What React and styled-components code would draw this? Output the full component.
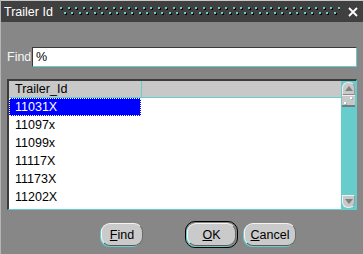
import React from 'react'
import styled, { createGlobalStyle } from 'styled-components'

const GlobalStyle = createGlobalStyle`
    body {
        margin: 0;
        font-family: "Liberation Sans", Arial, sans-serif;
        font-size: 12px;
    }
`

const Window = styled.div`
    width: 363px;
    height: 254px;
    box-sizing: border-box;
    background: #878787;
    border-left: 1px solid #b4b4b4;
    display: flex;
    flex-direction: column;
    overflow: hidden;
`

const TitleBar = styled.div`
    height: 21px;
    border-top: 1px solid #c8c8c8;
    background: #404040;
    display: flex;
    align-items: center;
    padding-left: 3px;
`

const Title = styled.span`
    color: #ffffff;
    font-size: 12.5px;
    margin-right: 7px;
    white-space: nowrap;
`

const Dots = styled.svg`
    flex: 1;
    height: 21px;
    display: block;
`

const Close = styled.svg`
    width: 10px;
    height: 10px;
    margin: 0 5px 0 8px;
`

const FindRow = styled.div`
    display: flex;
    align-items: center;
    margin-top: 25px;
    padding-left: 6px;
`

const Label = styled.span`
    width: 25px;
    color: #f6f6f6;
    font-size: 12.5px;
`

const Input = styled.div`
    width: 325px;
    height: 20px;
    box-sizing: border-box;
    background: #fff;
    border-top: 1px solid #3a3a3a;
    border-left: 1px solid #3a3a3a;
    border-right: 1px solid #66cccc;
    border-bottom: 1px solid #66cccc;
    padding-left: 3px;
    line-height: 18px;
    color: #000;
    font-size: 12.5px;
`

const ListBox = styled.div`
    margin: 12px 0 0 6px;
    width: 350px;
    height: 131px;
    box-sizing: border-box;
    border-top: 2px solid #3c3c3c;
    border-left: 2px solid #3c3c3c;
    border-right: 1px solid #66cccc;
    border-bottom: 1px solid #66cccc;
    display: flex;
    background: #fff;
`

const Content = styled.div`
    flex: 1;
    display: flex;
    flex-direction: column;
`

const Header = styled.div`
    height: 17px;
    box-sizing: border-box;
    background: #c8c8c8;
    border-bottom: 1px solid #66cccc;
    display: flex;
`

const HeaderCell = styled.div`
    width: 133px;
    box-sizing: border-box;
    border-right: 1px solid #66cccc;
    padding-left: 6px;
    line-height: 16px;
    color: #000;
    font-size: 12.5px;
`

const Row = styled.div`
    width: 132px;
    height: 18px;
    box-sizing: border-box;
    padding-left: 6px;
    line-height: 18px;
    font-size: 12.5px;
    color: ${p => (p.selected ? '#fff' : '#000')};
    background: ${p => (p.selected ? '#0000ff' : 'transparent')};
    outline: ${p => (p.selected ? '1px dotted #fff' : 'none')};
    outline-offset: -1px;
`

const Scrollbar = styled.div`
    width: 15px;
    background: #66cccc;
    display: flex;
    flex-direction: column;
    align-items: center;
`

const ArrowButton = styled.div`
    width: 13px;
    height: 13px;
    box-sizing: border-box;
    margin-top: ${p => (p.down ? 'auto' : '1px')};
    margin-bottom: ${p => (p.down ? '1px' : '0')};
    background: #c8c8c8;
    border: 1px solid #f0f0f0;
    border-right-color: #9a9a9a;
    border-bottom-color: ${p => (p.down ? '#f0f0f0' : '#8a8a8a')};
    border-radius: ${p => (p.down ? '0 0 6px 6px' : '6px 6px 0 0')};
    display: flex;
    align-items: center;
    justify-content: center;
`

const Thumb = styled.div`
    width: 13px;
    height: 12px;
    box-sizing: border-box;
    background: #c8c8c8;
    border-top: 1px solid #f0f0f0;
    border-bottom: 2px solid #7a7a7a;
    position: relative;
`

const Grip = styled.span`
    position: absolute;
    width: 2px;
    height: 2px;
    background: #fff;
    box-shadow: 1px 1px 0 #66cccc;
    top: ${p => p.top}px;
    left: ${p => p.left}px;
`

const ButtonRow = styled.div`
    display: flex;
    align-items: center;
    margin-top: 11px;
    padding-left: 100px;
`

const Button = styled.div`
    width: ${p => p.w}px;
    height: 23px;
    box-sizing: border-box;
    margin-left: ${p => p.gap || 0}px;
    background: #cacaca;
    border: 1px solid #f4f4f4;
    border-right-color: #6a6a6a;
    border-bottom-color: #5a5a5a;
    border-radius: 9px;
    box-shadow: -1px 1px 0 #66cccc;
    display: flex;
    align-items: center;
    justify-content: center;
    color: #000;
    font-size: 12.5px;
`

const DefaultFrame = styled.div`
    margin-left: 42px;
    padding: 1px;
    border: 1px solid #000;
    border-radius: 10px;
    display: flex;
`

const rows = ['11031X', '11097x', '11099x', '11117X', '11173X', '11202X']

// one tile of the title bar texture: two staggered rows of cyan dots with a black shadow
const dotSpots = [
    [0, 6],
    [8, 6],
    [4, 11],
    [11, 11],
]

function TitleDots() {
    return (
        <Dots>
            <defs>
                <pattern id="dots" width="15" height="21" patternUnits="userSpaceOnUse">
                    {dotSpots.map(([x, y]) => (
                        <g key={`${x}-${y}`}>
                            <rect x={x + 1} y={y + 1} width="2" height="2" fill="#000" />
                            <rect x={x} y={y} width="2" height="2" fill="#66cccc" />
                        </g>
                    ))}
                </pattern>
            </defs>
            <rect width="100%" height="21" fill="url(#dots)" shapeRendering="crispEdges" />
        </Dots>
    )
}

export default function App() {
    return (
        <Window>
            <GlobalStyle />
            <TitleBar>
                <Title>Trailer Id</Title>
                <TitleDots />
                <Close viewBox="0 0 10 10">
                    <path d="M1 1 L9 9 M9 1 L1 9" stroke="#fff" strokeWidth="1.8" />
                </Close>
            </TitleBar>
            <FindRow>
                <Label>Find</Label>
                <Input>%</Input>
            </FindRow>
            <ListBox>
                <Content>
                    <Header>
                        <HeaderCell>Trailer_Id</HeaderCell>
                    </Header>
                    {rows.map((r, i) => (
                        <Row key={r} selected={i === 0}>
                            {r}
                        </Row>
                    ))}
                </Content>
                <Scrollbar>
                    <ArrowButton>
                        <svg width="8" height="5" viewBox="0 0 8 5">
                            <path d="M4 0 L8 5 L0 5 Z" fill="#808080" />
                        </svg>
                    </ArrowButton>
                    <Thumb>
                        <Grip top={1} left={8} />
                        <Grip top={6} left={2} />
                    </Thumb>
                    <ArrowButton down>
                        <svg width="8" height="5" viewBox="0 0 8 5">
                            <path d="M0 0 L8 0 L4 5 Z" fill="#808080" />
                        </svg>
                    </ArrowButton>
                </Scrollbar>
            </ListBox>
            <ButtonRow>
                <Button w={42}>
                    <span><u>F</u>ind</span>
                </Button>
                <DefaultFrame>
                    <Button w={49}>
                        <span><u>O</u>K</span>
                    </Button>
                </DefaultFrame>
                <Button w={52} gap={6}>
                    <span><u>C</u>ancel</span>
                </Button>
            </ButtonRow>
        </Window>
    )
}
